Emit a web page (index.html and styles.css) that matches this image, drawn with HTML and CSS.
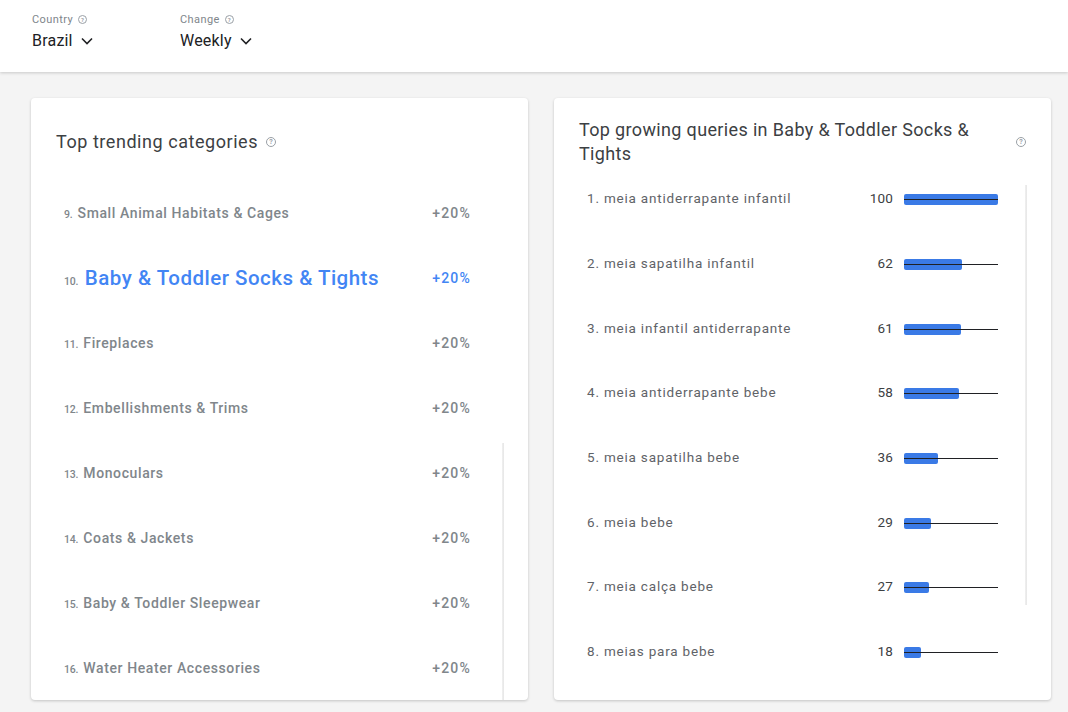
FILE: index.html
```html
<!DOCTYPE html>
<html lang="en">
<head>
<meta charset="UTF-8">
<meta name="viewport" content="width=device-width, initial-scale=1.0">
<title>Trending categories</title>
<link rel="stylesheet" href="styles.css">
</head>
<body>
  <!-- filter bar -->
  <header class="filters">
    <div class="filter">
      <div class="filter-label">Country <span class="help small">?</span></div>
      <div class="filter-value">Brazil
        <svg class="chevron" viewBox="0 0 12 8"><path d="M1 1.5l5 5 5-5" fill="none" stroke="#202124" stroke-width="1.6"/></svg>
      </div>
    </div>
    <div class="filter">
      <div class="filter-label">Change <span class="help small">?</span></div>
      <div class="filter-value">Weekly
        <svg class="chevron" viewBox="0 0 12 8"><path d="M1 1.5l5 5 5-5" fill="none" stroke="#202124" stroke-width="1.6"/></svg>
      </div>
    </div>
  </header>

  <main class="cards">
    <!-- categories -->
    <section class="card">
      <div class="card-head">
        <h2 class="card-title">Top trending categories <span class="help">?</span></h2>
      </div>
      <ul class="categories">
        <li><span class="name"><small>9.</small> Small Animal Habitats &amp; Cages</span><span class="pct">+20%</span></li>
        <li class="active"><span class="name"><small>10.</small> Baby &amp; Toddler Socks &amp; Tights</span><span class="pct">+20%</span></li>
        <li><span class="name"><small>11.</small> Fireplaces</span><span class="pct">+20%</span></li>
        <li><span class="name"><small>12.</small> Embellishments &amp; Trims</span><span class="pct">+20%</span></li>
        <li><span class="name"><small>13.</small> Monoculars</span><span class="pct">+20%</span></li>
        <li><span class="name"><small>14.</small> Coats &amp; Jackets</span><span class="pct">+20%</span></li>
        <li><span class="name"><small>15.</small> Baby &amp; Toddler Sleepwear</span><span class="pct">+20%</span></li>
        <li><span class="name"><small>16.</small> Water Heater Accessories</span><span class="pct">+20%</span></li>
      </ul>
      <div class="thumb thumb-left"></div>
    </section>

    <!-- queries -->
    <section class="card">
      <div class="card-head">
        <h2 class="card-title long">Top growing queries in Baby &amp; Toddler Socks &amp; Tights</h2>
        <span class="help">?</span>
      </div>
      <ul class="queries">
        <li><span class="q">1. meia antiderrapante infantil</span><span class="val">100</span><span class="bar"><i style="width:100%"></i></span></li>
        <li><span class="q">2. meia sapatilha infantil</span><span class="val">62</span><span class="bar"><i style="width:62%"></i></span></li>
        <li><span class="q">3. meia infantil antiderrapante</span><span class="val">61</span><span class="bar"><i style="width:61%"></i></span></li>
        <li><span class="q">4. meia antiderrapante bebe</span><span class="val">58</span><span class="bar"><i style="width:58%"></i></span></li>
        <li><span class="q">5. meia sapatilha bebe</span><span class="val">36</span><span class="bar"><i style="width:36%"></i></span></li>
        <li><span class="q">6. meia bebe</span><span class="val">29</span><span class="bar"><i style="width:29%"></i></span></li>
        <li><span class="q">7. meia calça bebe</span><span class="val">27</span><span class="bar"><i style="width:27%"></i></span></li>
        <li><span class="q">8. meias para bebe</span><span class="val">18</span><span class="bar"><i style="width:18%"></i></span></li>
      </ul>
      <div class="thumb thumb-right"></div>
    </section>
  </main>
</body>
</html>
```

FILE: styles.css
```css
/* page */
body {
  margin: 0;
  background: #f4f4f4;
  font-family: Roboto, "Liberation Sans", sans-serif;
  color: #202124;
  height: 712px;
  overflow: hidden;
}

/* top filter bar */
.filters {
  height: 72px;
  background: #fff;
  box-shadow: 0 1px 3px rgba(0, 0, 0, 0.18);
  display: flex;
  padding-left: 32px;
  box-sizing: border-box;
  position: relative;
  z-index: 1;
}
.filter {
  width: 148px;
  padding-top: 12px;
}
.filter-label {
  font-size: 11px;
  color: #80868b;
  letter-spacing: 0.4px;
  display: flex;
  align-items: center;
  gap: 5px;
  height: 14px;
}
.filter-value {
  font-size: 16px;
  margin-top: 5px;
  letter-spacing: 0.2px;
  display: flex;
  align-items: center;
  gap: 8px;
}
.chevron {
  width: 12px;
  height: 8px;
}

/* little help icon, a question mark in a ring */
.help {
  display: inline-flex;
  align-items: center;
  justify-content: center;
  width: 10px;
  height: 10px;
  border: 1.2px solid #9aa0a6;
  border-radius: 50%;
  font-size: 7px;
  font-weight: 700;
  color: #9aa0a6;
  box-sizing: border-box;
  vertical-align: middle;
  letter-spacing: 0;
}
.help.small {
  width: 9px;
  height: 9px;
  font-size: 6px;
}

/* cards */
.cards {
  display: flex;
  gap: 26px;
  padding: 26px 0 0 31px;
}
.card {
  width: 497px;
  height: 602px;
  background: #fff;
  border-radius: 4px;
  box-shadow: 0 1px 3px rgba(0, 0, 0, 0.2);
  position: relative;
  overflow: hidden;
}
.card-head {
  height: 48px;
  margin-top: 20px;
  padding: 0 25px;
  display: flex;
  align-items: center;
  justify-content: space-between;
}
.card-title {
  margin: 0;
  font-size: 18px;
  font-weight: 400;
  line-height: 24px;
  color: #3c4043;
  letter-spacing: 0.55px;
  max-width: 410px;
}
.card-title.long {
  letter-spacing: 0.35px;
}
.card-title .help {
  margin-left: 3px;
  margin-top: -2px;
}

/* category list */
.categories {
  list-style: none;
  margin: 0;
  padding: 15px 57px 0 33px;
}
.categories li {
  height: 64.9px;
  display: flex;
  align-items: center;
  justify-content: space-between;
  font-size: 14px;
  font-weight: 500;
  letter-spacing: 0.6px;
  color: #80868b;
}
.categories small {
  font-size: 10.5px;
  font-weight: 500;
  letter-spacing: -0.2px;
  margin-right: 1px;
}
.categories .pct {
  letter-spacing: 1.2px;
}
.categories .active {
  color: #4285f4;
}
.categories .active .name {
  font-size: 20.5px;
  letter-spacing: 0.5px;
}
.categories .active small {
  color: #80868b;
  font-size: 10.5px;
  letter-spacing: -0.2px;
}
.categories .active .pct {
  font-size: 14px;
}

/* query list with bars */
.queries {
  list-style: none;
  margin: 0;
  padding: 0 53px 0 33px;
}
.queries li {
  height: 64.7px;
  display: flex;
  align-items: center;
  font-size: 13.5px;
  color: #5f6368;
  letter-spacing: 0.8px;
}
.queries .q {
  flex: 1;
}
.queries .val {
  width: 40px;
  text-align: right;
  color: #3c4043;
  letter-spacing: 0.2px;
  margin-right: 11px;
}
.bar {
  width: 94px;
  height: 11px;
  position: relative;
  margin-top: 3px;
}
.bar i {
  display: block;
  height: 100%;
  background: #3a7ae6;
  border-radius: 2px;
}
.bar::after {
  content: "";
  position: absolute;
  left: 0;
  right: 0;
  top: 5px;
  height: 1px;
  background: #202124;
}

/* faint scroll thumbs along the lists */
.thumb {
  position: absolute;
  left: 471px;
  width: 2px;
  background: linear-gradient(to right, #f0f0f0, #e6e6e6);
}
.thumb-left {
  top: 345px;
  bottom: 0;
}
.thumb-right {
  top: 87px;
  height: 420px;
}
```
